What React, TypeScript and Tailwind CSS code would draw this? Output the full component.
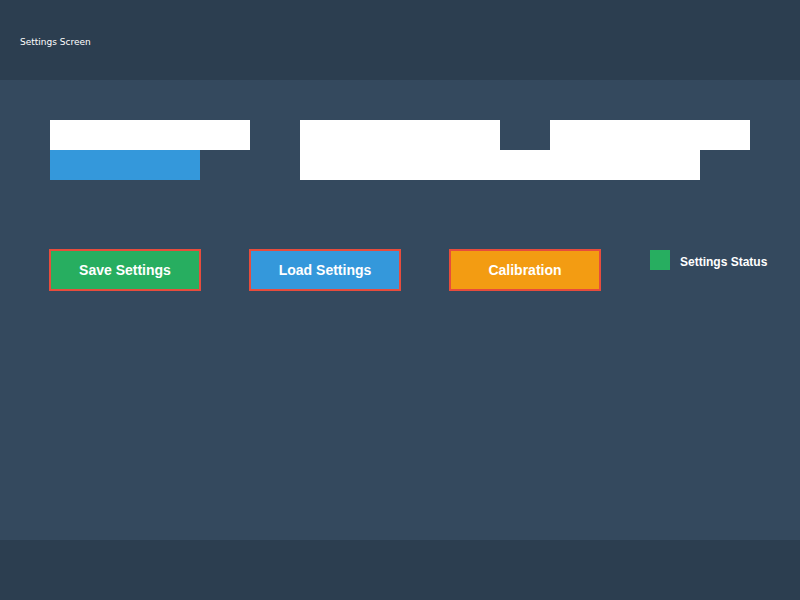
export default function App() {
  const buttons = [
    { label: "Save Settings", bg: "bg-[#27ae60]" },
    { label: "Load Settings", bg: "bg-[#3498db]" },
    { label: "Calibration", bg: "bg-[#f39c12]" },
  ];

  return (
    <div className="w-[800px] h-[600px] flex flex-col bg-[#34495e] font-['Liberation_Sans',Arial,sans-serif] overflow-hidden">
      <header className="h-[80px] shrink-0 bg-[#2c3e50] flex items-center px-5 pt-[5px]">
        <span className="text-[9px] text-white font-['DejaVu_Sans',sans-serif]">Settings Screen</span>
      </header>

      <main className="flex-1 px-[50px] pt-[40px]">
        {/* bars */}
        <div className="flex gap-[50px]">
          <div className="flex flex-col">
            <div className="w-[200px] h-[30px] bg-white" />
            <div className="w-[150px] h-[30px] bg-[#3498db]" />
          </div>
          <div className="flex flex-col">
            <div className="flex gap-[50px]">
              <div className="w-[200px] h-[30px] bg-white" />
              <div className="w-[200px] h-[30px] bg-white" />
            </div>
            <div className="w-[400px] h-[30px] bg-white" />
          </div>
        </div>

        {/* actions */}
        <div className="flex items-start mt-[69px] -ml-px">
          {buttons.map((b) => (
            <button
              key={b.label}
              className={`w-[152px] h-[42px] shrink-0 mr-[48px] border-2 border-[#e74c3c] ${b.bg} text-white text-[14px] font-bold`}
            >
              {b.label}
            </button>
          ))}
          <div className="flex items-start shrink-0 gap-[10px] mt-px ml-px">
            <div className="w-5 h-5 bg-[#27ae60]" />
            <span className="text-white text-[12px] font-bold whitespace-nowrap mt-[3px]">Settings Status</span>
          </div>
        </div>
      </main>

      <footer className="h-[60px] shrink-0 bg-[#2c3e50]" />
    </div>
  );
}
